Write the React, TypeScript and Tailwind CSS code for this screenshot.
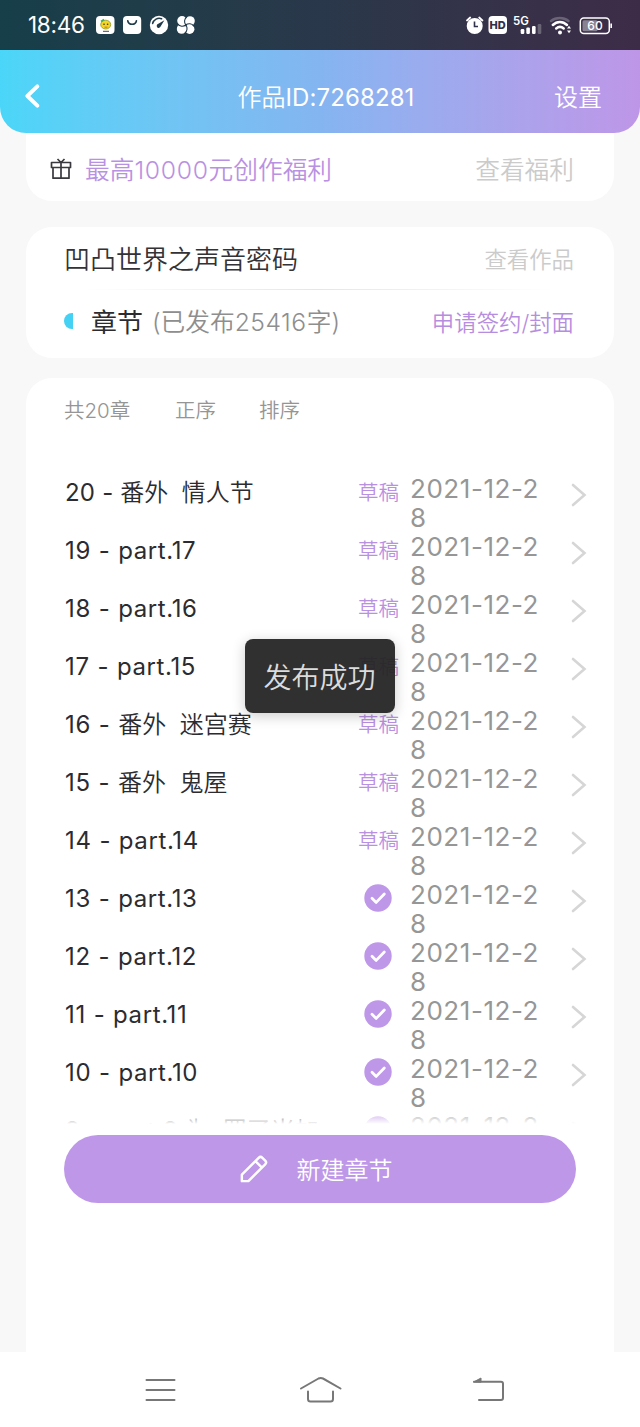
import React from "react";

interface Chapter {
  no: number;
  title: string;
  draft: boolean;
}

const chapters: Chapter[] = [
  { no: 20, title: "番外  情人节", draft: true },
  { no: 19, title: "part.17", draft: true },
  { no: 18, title: "part.16", draft: true },
  { no: 17, title: "part.15", draft: true },
  { no: 16, title: "番外  迷宫赛", draft: true },
  { no: 15, title: "番外  鬼屋", draft: true },
  { no: 14, title: "part.14", draft: true },
  { no: 13, title: "part.13", draft: false },
  { no: 12, title: "part.12", draft: false },
  { no: 11, title: "part.11", draft: false },
  { no: 10, title: "part.10", draft: false },
  { no: 9, title: "part.9 为  罢了米加", draft: false },
];

const StatusBar: React.FC = () => (
  <div className="flex h-[50px] items-center justify-between bg-gradient-to-r from-[#163f49] via-[#29384a] to-[#3d2c48] pl-7 pr-[28px] text-white">
    <div className="flex items-center">
      <span className="w-[68px] whitespace-nowrap pt-px text-[22.5px] leading-none tracking-[-0.3px]">18:46</span>
      <svg width="100" height="20" viewBox="0 0 100 20">
        {/* message app */}
        <rect x="0" y="1" width="18.5" height="18" rx="4" fill="#fff" />
        <ellipse cx="9.7" cy="9.6" rx="5" ry="4.4" fill="#f4d51f" stroke="#8a9a2c" strokeWidth=".8" />
        <path d="M5 6.5l3-2" stroke="#3fae5a" strokeWidth="1.6" />
        <circle cx="8" cy="9.2" r=".8" fill="#333" />
        <circle cx="11.6" cy="9.2" r=".8" fill="#333" />
        <path d="M8.5 12.2h3" stroke="#e07a2a" strokeWidth="1.2" />
        <path d="M7 16.3h6" stroke="#333" strokeWidth=".9" />
        {/* shop */}
        <rect x="27" y="1" width="18.2" height="18" rx="4" fill="#fff" />
        <path d="M31.8 5.8c.8 4.6 7.8 4.6 8.6 0" stroke="#1f3c4a" strokeWidth="1.7" fill="none" strokeLinecap="round" />
        {/* gauge */}
        <circle cx="63" cy="10" r="9.2" fill="#fff" />
        <path d="M56.6 8.5a6.8 6.8 0 0 1 9-4.8" stroke="#203a49" strokeWidth="1.5" fill="none" strokeLinecap="round" />
        <path d="M68.4 5.2l-3.8 6.4a2 2 0 1 1-2.7-2.5z" fill="#203a49" />
        {/* fan */}
        <g fill="#fff">
          <circle cx="86" cy="5.8" r="4.8" />
          <circle cx="94" cy="6" r="4.8" />
          <circle cx="93.6" cy="14.2" r="4.8" />
          <circle cx="85.6" cy="14" r="4.8" />
        </g>
        <g fill="none" stroke="#223949" strokeWidth="1.1" strokeLinecap="round">
          <path d="M89.800 10c-2-2.500-1.500-6 .8-8" />
          <path d="M89.800 10c2.500-2 6-1.500 8 .8" />
          <path d="M89.800 10c2 2.500 1.500 6-.8 8" />
          <path d="M89.800 10c-2.500 2-6 1.500-8-.8" />
        </g>
      </svg>
    </div>
    <svg width="146" height="24" viewBox="0 0 146 24">
      {/* alarm */}
      <circle cx="8.7" cy="13" r="8" fill="#fff" />
      <path d="M8.5 8.5v5H12" stroke="#30334a" strokeWidth="1.6" fill="none" />
      <path d="M1 7.5l3.2-3M16.4 7.5l-3.2-3" stroke="#fff" strokeWidth="1.8" strokeLinecap="round" />
      {/* hd */}
      <rect x="22.5" y="3" width="18.5" height="18" rx="4" fill="#fff" />
      <text x="31.7" y="16" textAnchor="middle" fontSize="11" fontWeight="800" fill="#2f3148">HD</text>
      {/* mobile signal */}
      <text x="47" y="11.5" fontSize="11.5" fontWeight="600" fill="#fff">5G</text>
      <rect x="54.7" y="16" width="3.6" height="5" rx="1.2" fill="#fff" />
      <rect x="60.3" y="14.5" width="3.6" height="6.5" rx="1.2" fill="#fff" />
      <rect x="66" y="13" width="3.6" height="8" rx="1.2" fill="#fff" />
      <rect x="71.7" y="11" width="3.6" height="10" rx="1.2" fill="#fff" opacity=".25" />
      {/* wifi */}
      <g fill="none" strokeWidth="2.5" strokeLinecap="round" stroke="#fff">
        <path d="M85 8c5-4 12.500-4 17.500 0" opacity=".25" />
        <path d="M86.800 12c4.200-4 10-4 14.200 0" />
        <path d="M90.200 15.500c2.300-2 5.200-2 7.500 0" />
      </g>
      <circle cx="94" cy="19.500" r="2" fill="#fff" />
      <path d="M101 15.500l2-2.800 2 2.800zM101 17.500l2 2.800 2-2.800z" fill="#fff" />
      {/* battery */}
      <rect x="114.300" y="5" width="29" height="15.500" rx="3.500" fill="none" stroke="#fff" strokeWidth="1.5" />
      <rect x="116.500" y="7.200" width="15" height="11" rx="1.500" fill="#fff" opacity=".4" />
      <rect x="144.400" y="10.500" width="1.600" height="4.500" fill="#fff" />
      <text x="129" y="17.100" textAnchor="middle" fontSize="12" fontWeight="500" fill="#fff">60</text>
    </svg>
  </div>
);

const Header: React.FC = () => (
  <header className="relative z-10 flex h-[83px] items-center rounded-b-[26px] bg-gradient-to-r from-[#4ad6f8] via-[#84b5f1] to-[#be96e8] pt-[12px] text-2xl font-[350] text-white">
    <div className="flex-1 pl-[25px]">
      <svg className="-mt-[3px]" width="15" height="24" viewBox="0 0 14 22" fill="none" stroke="#fff" strokeWidth="3.6" strokeLinecap="round" strokeLinejoin="round">
        <path d="M11.5 2L2.2 11l9.3 9" />
      </svg>
    </div>
    <h1 className="whitespace-nowrap pl-[25px]">
      作品<span className="font-normal tracking-[0.1px]">ID:7268281</span>
    </h1>
    <div className="flex-1 pr-[38px] text-right">设置</div>
  </header>
);

const GiftIcon: React.FC = () => (
  <svg className="-mt-[4px]" width="22" height="22" viewBox="0 0 22 22" fill="none" stroke="#3a3a3e" strokeWidth="1.7" strokeLinejoin="round">
    <path d="M1.5 4.5h19v5h-19zM3 9.5v10.7h16V9.5M11 4.5v15.7M7.5 1L11 4.500 14.500 1" />
  </svg>
);

const ChapterRow: React.FC<{ chapter: Chapter }> = ({ chapter }) => {
  const [, latin = "", rest = ""] = chapter.title.match(/^([\w.]*)(.*)$/) ?? [];

  return (
    <li className="flex h-[58px] items-start">
      <span className="w-[293px] overflow-hidden whitespace-pre pt-[2px] text-2xl leading-[34px] text-[#2c2c30]">
        <span className={chapter.no === 20 ? "tracking-[0.2px]" : "tracking-[0.8px]"}>{chapter.no} - </span>
        <span className="tracking-[0.6px]">{latin}</span>
        <span className="font-[350]">{rest}</span>
      </span>
      <span className="flex h-[36px] w-[52px] items-center">
        {chapter.draft ? (
          <span className="pt-[2px] text-[20.5px] font-[350] leading-none text-[#b990e2]">草稿</span>
        ) : (
          <svg className="-mt-px ml-[6px]" width="28" height="28" viewBox="0 0 28 28">
            <circle cx="14" cy="14" r="13.7" fill="#be97e8" />
            <path d="M8 14.2l4.2 4.2L20.3 10" fill="none" stroke="#fff" strokeWidth="2.8" strokeLinecap="round" strokeLinejoin="round" />
          </svg>
        )}
      </span>
      <span className="w-[144px] whitespace-nowrap text-[26px] leading-[29px] tracking-[0.55px] text-[#969696]">
        2021-12-2
        <br />8
      </span>
      <svg className="ml-[17px] mt-[9px] shrink-0" width="16" height="24" viewBox="0 0 16 24" fill="none" stroke="#d6d6d6" strokeWidth="2.6" strokeLinecap="round">
        <path d="M2 2l11.500 10L2 22" />
      </svg>
    </li>
  );
};

const Toast: React.FC<{ message: string }> = ({ message }) => (
  <div className="absolute left-[245px] top-[639px] z-20 flex h-[74px] w-[150px] items-center justify-center rounded-lg bg-[#252525]/95 pr-px pt-[4px] text-[28px] font-[350] text-[#dcdcdc] shadow-[0_3px_14px_rgba(0,0,0,0.2)]">
    {message}
  </div>
);

const NavBar: React.FC = () => (
  <nav className="flex h-[75px] items-center bg-white pl-[144px]">
    <svg width="32" height="32" viewBox="0 0 32 32" stroke="#777" strokeWidth="2" strokeLinecap="round">
      <path d="M2.5 6h28M2.500 16h28M2.500 26h28" />
    </svg>
    <svg className="ml-[122px]" width="44" height="32" viewBox="0 0 44 32" fill="none" stroke="#777" strokeWidth="2" strokeLinecap="round" strokeLinejoin="round">
      <path d="M3 14.500L20.500 4.500q2.300-1.200 4.500 0L42.500 14.500M10 17.500v7.500q0 2.500 2.500 2.500h20q2.500 0 2.500-2.500v-7.500" />
    </svg>
    <svg className="ml-[130px]" width="32" height="32" viewBox="0 0 32 32" fill="none" stroke="#777" strokeWidth="2" strokeLinecap="round" strokeLinejoin="round">
      <path d="M2 7.800h27q2 0 2 2V24q0 2-2 2H7" />
      <path d="M2 7.800L9 4v3.800z" fill="#777" strokeWidth="1" />
    </svg>
  </nav>
);

const App: React.FC = () => {
  return (
    <div className="relative flex h-[1427px] w-[640px] flex-col overflow-hidden bg-[#f8f8f8] font-['Inter','Noto_Sans_CJK_SC',sans-serif]">
      <StatusBar />
      <Header />

      <main className="-mt-[10px] flex flex-1 flex-col px-[26px]">
        {/* Welfare banner */}
        <section className="flex h-[78px] items-center rounded-b-[26px] bg-white pl-6 pr-10 pt-[17px] text-[24.7px] font-[350]">
          <GiftIcon />
          <span className="ml-[13px] flex-1 text-[#b991e3]">
            最高<span className="tracking-[0.7px]">10000</span>元创作福利
          </span>
          <span className="text-[#cbcbcb]">查看福利</span>
        </section>

        {/* Work info */}
        <section className="mt-[26px] h-[131px] rounded-[26px] bg-white pl-[38px] pr-10">
          <div className="flex h-[62px] items-center justify-between pt-[3px]">
            <span className="text-[26px] font-[350] text-[#333337]">凹凸世界之声音密码</span>
            <span className="text-[22.4px] font-[350] text-[#cbcbcb]">查看作品</span>
          </div>
          <div className="mx-5 h-px bg-gradient-to-r from-transparent via-[#e6e6e6] to-transparent" />
          <div className="flex h-[62px] items-center pt-[3px]">
            <span className="-mt-1 mr-[18px] h-4 w-[9px] rounded-l-full bg-[#45d1f3]" />
            <span className="text-[26px] text-[#2c2c30]">章节</span>
            <span className="ml-[9px] flex-1 whitespace-nowrap pt-px text-[24.7px] font-[350] text-[#8e8e8e]">
              (已发布<span className="tracking-[0.5px]">25416</span>字)
            </span>
            <span className="text-[22.4px] font-[350] text-[#b78de0]">申请签约/封面</span>
          </div>
        </section>

        {/* Chapter list */}
        <section className="mt-5 flex flex-1 flex-col rounded-t-[26px] bg-white px-[38px]">
          <div className="flex h-[96px] pt-[18px] text-[20.5px] font-[350] text-[#959595]">
            <span className="w-[111px]">共20章</span>
            <span className="w-[84px]">正序</span>
            <span>排序</span>
          </div>
          <div className="relative -mr-[20px] h-[650px] overflow-hidden">
            <ul className="pl-px">
              {chapters.map((chapter) => (
                <ChapterRow key={chapter.no} chapter={chapter} />
              ))}
            </ul>
            <div className="absolute inset-x-0 bottom-0 h-[13px] bg-gradient-to-b from-white/20 to-white" />
          </div>
          <button className="mt-[11px] flex h-[68px] items-center justify-center rounded-full bg-[#be97e8] pr-2 text-2xl font-[350] text-white">
            <svg className="mr-[29px]" width="28" height="28" viewBox="0 0 30 30" fill="none" stroke="#fff" strokeWidth="2.6" strokeLinejoin="round">
              <path d="M2 28v-7L20 3q2-2 4 0l3 3q2 2 0 4L9 28zM16.500 6.500l7 7" />
            </svg>
            <span className="pt-[4px]">新建章节</span>
          </button>
        </section>
      </main>

      <NavBar />
      <Toast message="发布成功" />
    </div>
  );
};

export default App;
